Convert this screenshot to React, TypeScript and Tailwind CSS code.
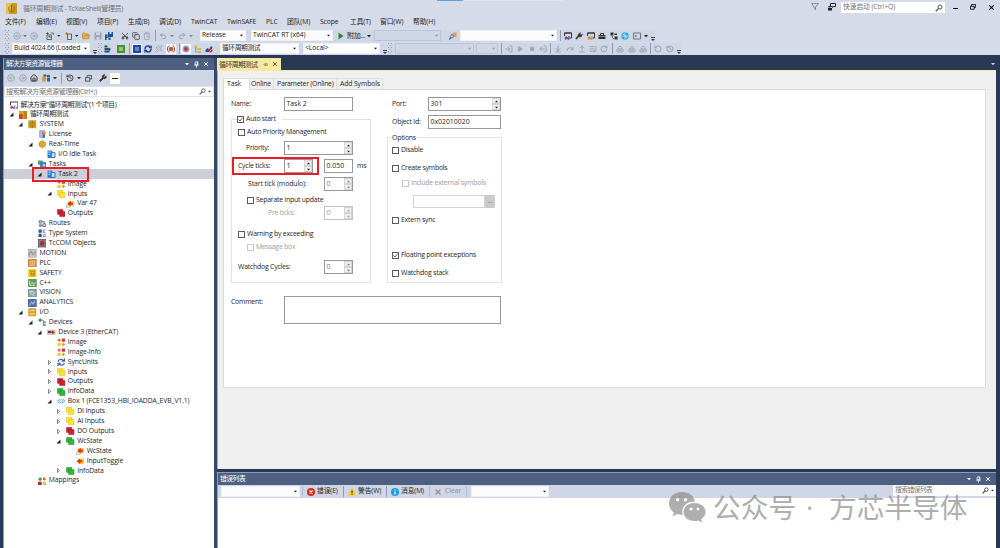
import type { ReactNode } from "react";
import {
  ArrowDownToLine, ArrowUpFromLine, CircleArrowLeft, CircleArrowRight, ClipboardPaste, Copy, FolderOpen, History,
  House, ListEnd, LogIn, LogOut, Play, Redo, Redo2, RefreshCw, RotateCcw, RotateCw, Scissors, Square, Undo2, WandSparkles, Wrench,
} from "lucide-react";
import clsx from "clsx";

/* ---------- small building blocks ---------- */

function Svg({ children, className = "" }: { children: ReactNode; className?: string }) {
  return <svg viewBox="0 0 16 16" className={clsx("block size-2 shrink-0", className)}>{children}</svg>;
}

function Caret({ className = "" }: { className?: string }) {
  return (
    <svg viewBox="0 0 8 8" className={clsx("block size-1 shrink-0", className)}>
      <path d="M0 2h8L4 6.5z" fill="currentColor" />
    </svg>
  );
}

function Overflow({ className = "" }: { className?: string }) {
  return (
    <svg viewBox="0 0 8 16" className={clsx("block h-2 w-1 shrink-0 self-end", className)}>
      <path d="M0 6h8v2H0zM0 10h8l-4 4z" fill="#3a3a3a" />
    </svg>
  );
}

function Grip({ className = "" }: { className?: string }) {
  return (
    <svg viewBox="0 0 4 11" className={clsx("block h-[11px] w-1 shrink-0", className)} fill="#8f98ad">
      {[0, 2, 4, 6, 8, 10].map((y) => (
        <rect key={y} x={y % 4 === 0 ? 0 : 1.5} y={y} width="1" height="1" />
      ))}
      {[0, 4, 8].map((y) => <rect key={y} x="3" y={y} width="1" height="1" />)}
    </svg>
  );
}

function Sep({ className = "" }: { className?: string }) {
  return <div className={clsx("h-[11px] w-px shrink-0 bg-[#8e9bbc]", className)} />;
}

function Combo({ children, className = "", disabled = false }: { children?: ReactNode; className?: string; disabled?: boolean }) {
  return (
    <div
      className={clsx(
        "flex h-[11px] shrink-0 items-center justify-between overflow-hidden border pl-px pr-[2px] text-[6.8px] tracking-[-0.1px] whitespace-nowrap",
        disabled ? "border-[#bcc4d6] bg-[#cfd6e5] text-[#8b93a5]" : "border-[#eef0f6] bg-[#fcfcfc] text-[#1e1e1e]",
        className,
      )}
    >
      <span>{children}</span>
      <Caret className="size-[3px]" />
    </div>
  );
}

function Boxed({ children, className = "" }: { children: ReactNode; className?: string }) {
  return <div className={clsx("flex size-[10px] shrink-0 items-center justify-center bg-[#fffcf4]", className)}>{children}</div>;
}

function Search({ className = "" }: { className?: string }) {
  return (
    <Svg className={className}>
      <circle cx="10" cy="6" r="4" fill="none" stroke="currentColor" strokeWidth="2" />
      <path d="M7 9l-5.500 5.500" stroke="currentColor" strokeWidth="2.5" />
    </Svg>
  );
}

function Pin({ className = "" }: { className?: string }) {
  return (
    <Svg className={className}>
      <path d="M5 2h6v7H5zM3 9.500h10M8 10v5M10 2v7" fill="none" stroke="currentColor" strokeWidth="1.8" />
    </Svg>
  );
}

function Close({ className = "" }: { className?: string }) {
  return (
    <Svg className={className}>
      <path d="M3 3l10 10M13 3L3 13" stroke="currentColor" strokeWidth="2.4" />
    </Svg>
  );
}

function WindowIcon({ accent, className = "" }: { accent: string; className?: string }) {
  return (
    <Svg className={className}>
      <path d="M1 8V2h14v10h-4" fill="none" stroke="#333" strokeWidth="2" />
      <path d="M1 1h14v2H1z" fill="#333" />
      <path d="M2 11l3-2 4 5 1-6v7l-4-2-3 2z" fill={accent} stroke={accent} strokeWidth="1.5" />
    </Svg>
  );
}

/* ---------- top of the window ---------- */

const MENUS = [
  { label: "文件(F)", cls: "w-[31px]" },
  { label: "编辑(E)", cls: "w-[30px]" },
  { label: "视图(V)", cls: "w-[31px]" },
  { label: "项目(P)", cls: "w-[31px]" },
  { label: "生成(B)", cls: "w-[31px]" },
  { label: "调试(D)", cls: "w-[32px]" },
  { label: "TwinCAT", cls: "w-[36px]" },
  { label: "TwinSAFE", cls: "w-[39px]" },
  { label: "PLC", cls: "w-[21px]" },
  { label: "团队(M)", cls: "w-[33px]" },
  { label: "Scope", cls: "w-[30px]" },
  { label: "工具(T)", cls: "w-[30px]" },
  { label: "窗口(W)", cls: "w-[33px]" },
  { label: "帮助(H)", cls: "w-[30px]" },
];

function TitleBar() {
  return (
    <div className="flex h-[15px] items-start">
      <Svg className="mt-[3px] ml-[6px] size-[11px]">
        <rect width="16" height="16" rx="1" fill="#c9991f" />
        <path d="M0 0h9L4 16H0z" fill="#e6c050" />
        <path d="M8 3v10M4 6l4-3 4 3v5l-4 2-4-2z" stroke="#8d6508" fill="none" />
      </Svg>
      <div className="mt-[3px] ml-[6px] w-[120px] whitespace-nowrap text-[7px] leading-[11px] tracking-[-0.32px] text-[#6d6d74]">
        循环周期测试 - TcXaeShell(管理员)
      </div>
      <div className="ml-[294px] h-px w-[26px] bg-[#5fa4e0]" />
      <div className="h-px w-[100px] bg-[#e3e4e8]" />
      <div className="flex-1" />
      <Svg className="mt-[3px] text-[#777]">
        <path d="M1 1h14L9 8v6L2 1" fill="none" stroke="currentColor" strokeWidth="1.5" />
      </Svg>
      <Svg className="mt-[3px] ml-[9px]">
        <path d="M5 1h10v6h-4l-2 2V7H5z" fill="none" stroke="#222" strokeWidth="2" />
        <path d="M1 6h4v3H1zM0 10h8v5H0z" fill="#222" />
      </Svg>
      <div className="mt-[2px] ml-[5px] flex h-[11px] w-[104px] items-center justify-between bg-white px-[2px] text-[6.8px] tracking-[-0.1px] text-[#717171]">
        <span>快速启动 (Ctrl+Q)</span>
        <Search className="text-[#555]" />
      </div>
      <div className="mt-[8px] ml-[8px] h-px w-[5px] bg-black" />
      <Svg className="mt-[4px] ml-[12px] size-[6px]">
        <path d="M4 5V1h11v8h-4M1 6h10v8H1z" fill="none" stroke="#111" strokeWidth="2.5" />
      </Svg>
      <Close className="mt-[4px] mr-[5px] ml-[12px] size-[7px] text-black" />
    </div>
  );
}

function MenuBar() {
  return (
    <div className="flex h-[14px] items-center pl-[5px] text-[6.8px] tracking-[-0.12px] text-[#222]">
      {MENUS.map((m) => (
        <div key={m.label} className={clsx("shrink-0 whitespace-nowrap", m.cls)}>{m.label}</div>
      ))}
    </div>
  );
}

function MainToolbar() {
  return (
    <div className="flex h-[13px] items-center text-[7px]">
      <div className="flex h-[12px] items-center bg-[#cfd6e5] pl-[5px]">
        <Grip />
        <CircleArrowLeft className="ml-1 size-2 text-[#a0a7b7]" strokeWidth={3} />
        <Caret className="ml-[2px] text-[#777]" />
        <CircleArrowRight className="ml-[3px] size-2 text-[#a0a7b7]" strokeWidth={3} />
        <Svg className="ml-2">
          <path d="M2 6h9v9H2zM5 9h3v3" fill="none" stroke="#444" strokeWidth="1.6" />
          <path d="M3 0v6M0 3h6M9 2h6v4" stroke="#555" strokeWidth="1.5" fill="none" />
        </Svg>
        <Caret className="ml-[3px] size-[3.5px]" />
        <Svg className="ml-1">
          <path d="M5 4h8v11H5z" fill="none" stroke="#444" strokeWidth="1.6" />
          <path d="M3 0v6M0 3h6" stroke="#c58a1c" strokeWidth="2" />
        </Svg>
        <Caret className="ml-[2px] size-[3.5px]" />
        <FolderOpen className="ml-[4px] size-2 fill-[#e4b368] text-[#cb8b2c]" strokeWidth={3} />
        <Svg className="ml-1">
          <path d="M1 1h14v14H1z" fill="#9ea4b2" />
          <path d="M4 1h8v5H4zM5 10h6v5H5z" fill="#cfd6e5" />
        </Svg>
        <Svg className="ml-[3px]">
          <path d="M6 0h10v10H6zM0 5h5v6h6v5H0z" fill="#11529b" />
          <path d="M9 0h4v4H9zM3 12h4v4H3z" fill="#cfd6e5" />
        </Svg>
        <Scissors className="ml-2 size-2 -rotate-90 text-[#333]" strokeWidth={2.5} />
        <Copy className="ml-[3px] size-2 text-[#444]" strokeWidth={2.5} />
        <ClipboardPaste className="ml-[3px] size-2 text-[#a0a7b7]" strokeWidth={3} />
        <Sep className="ml-1" />
        <Undo2 className="ml-[3px] size-2 text-[#99a1b3]" strokeWidth={3} />
        <Caret className="ml-[3px] text-[#888]" />
        <Redo2 className="ml-1 size-2 text-[#99a1b3]" strokeWidth={3} />
        <Caret className="ml-[3px] text-[#888]" />
        <Combo className="ml-[7px] w-[46px]">Release</Combo>
        <Combo className="ml-[5px] w-[82px]">TwinCAT RT (x64)</Combo>
        <Svg className="ml-1"><path d="M3 1l10 7-10 7z" fill="#2c872c" /></Svg>
        <span className="ml-[2px] w-[18px] whitespace-nowrap tracking-[-0.3px]">附加...</span>
        <Caret className="ml-[2px]" />
        <Combo disabled className="ml-[3px] w-[67px]" />
        <Svg className="ml-2">
          <path d="M3 3h5l1-2h6v9H6z" fill="#dba04b" />
          <circle cx="6" cy="9" r="3" fill="#cfd6e5" stroke="#2f6db3" strokeWidth="1.5" />
          <path d="M4 11l-4 4" stroke="#2f6db3" strokeWidth="2.5" />
        </Svg>
        <Combo className="ml-[3px] w-[97px]" />
        <Sep className="ml-[3px]" />
        <WindowIcon accent="#7b3a94" className="ml-[3px]" />
        <Svg className="ml-[3px]">
          <path d="M2 14l6-7" stroke="#333" strokeWidth="3.5" />
          <path d="M7 4l4-3-1 4 2 1 3-2-2 5-5 1-2-3z" fill="#333" stroke="#333" />
        </Svg>
        <WindowIcon accent="#d8891d" className="ml-1" />
        <Svg className="ml-[3px]">
          <path d="M1 6h14v3H1zM1 10h14v4H1z" fill="#333" />
          <path d="M5 6V3h6v3" stroke="#333" strokeWidth="2" fill="none" />
        </Svg>
        <Svg className="ml-1">
          <path d="M1 1h6v6H1zM9 9h6v6H9zM9 3h5v3H9zM2 9h4v5h3z" fill="#333" />
        </Svg>
        <Svg className="ml-[3px]">
          <circle cx="8" cy="8" r="7.5" fill="#35a7df" />
          <path d="M8 1v14M1 8h14M3 3l10 10" stroke="#d8effa" strokeWidth="1.3" />
        </Svg>
        <Svg className="ml-1">
          <path d="M1 2h14v12H1zM4 6l3 2-3 2" fill="none" stroke="#666" strokeWidth="1.7" />
        </Svg>
        <Caret className="ml-[3px]" />
        <Overflow className="ml-[3px]" />
      </div>
    </div>
  );
}

function TwinCatToolbar() {
  return (
    <div className="flex h-[13px] items-center text-[7px]">
      <div className="flex h-[12px] items-center bg-[#cfd6e5] pl-[5px]">
        <Grip />
        <Combo className="ml-[3px] w-[78px]">
          <span className="tracking-[-0.2px]">Build 4024.66 (Loaded</span>
        </Combo>
        <Overflow className="ml-[3px]" />
        <Grip className="ml-px" />
        <Svg className="ml-[2px]">
          <path d="M1 1h6v4H1zM1 6h8v4H1zM1 11h10v4H1z" fill="#1c4f82" />
          <path d="M8 5l6 3-4 4z" fill="#333" />
        </Svg>
        <Svg className="ml-[5px]">
          <rect width="16" height="16" fill="#4c8d3b" />
          <rect x="4" y="4" width="8" height="8" fill="#8bd06b" />
        </Svg>
        <Sep className="ml-1" />
        <Boxed className="ml-[2px]">
          <Svg><rect width="16" height="16" fill="#1746b4" /><path d="M4 4h8v8H4z" fill="#6c84c0" /></Svg>
        </Boxed>
        <RefreshCw className="ml-[2px] size-2 text-[#21459c]" strokeWidth={4} />
        <WandSparkles className="ml-[3px] size-2 text-[#9aa2b4]" />
        <Boxed className="ml-[3px]">
          <Svg>
            <circle cx="8" cy="8" r="4.5" fill="#d34b43" />
            <path d="M4 1C0 5 0 11 4 15M12 1c4 4 4 10 0 14" fill="none" stroke="#3d332f" strokeWidth="1.8" />
          </Svg>
        </Boxed>
        <Sep className="ml-[3px]" />
        <Boxed className="ml-px">
          <Svg>
            <circle cx="8" cy="8" r="7" fill="#8ba6dc" />
            <circle cx="8" cy="8" r="4" fill="#d9302c" />
          </Svg>
        </Boxed>
        <Svg className="ml-[3px]">
          <path d="M1 1h5v5H1zM9 6h5v4H9zM9 12h5v4H9z" fill="#dcb23b" />
          <path d="M3 6v8h6M3 8h6" stroke="#777" fill="none" />
        </Svg>
        <Svg className="ml-[3px]">
          <path d="M1 10l4-4 3 3 4-7 3 3-5 9H1z" fill="#264b96" />
          <circle cx="11" cy="11" r="4" fill="#dc2a25" />
          <path d="M9 13l4-4" stroke="#fff" strokeWidth="1.3" />
        </Svg>
        <Combo className="ml-[7px] w-[79px]">
          <span className="tracking-[-0.45px]">循环周期测试</span>
        </Combo>
        <Combo className="ml-1 w-[77px]">&lt;Local&gt;</Combo>
        <Overflow className="ml-[3px]" />
        <Grip className="ml-px" />
        <Combo disabled className="ml-[3px] w-[79px]" />
        <Combo disabled className="ml-[2px] w-[22px]" />
        <div className="flex items-center text-[#9ca4b6]">
          <Sep className="ml-[3px]" />
          <LogIn className="ml-[3px] size-2" strokeWidth={3} />
          <Play className="ml-[3px] size-2 fill-current p-px" />
          <Square className="ml-1 size-2 fill-current p-[1.5px]" />
          <LogOut className="ml-[3px] size-2 -scale-x-100" strokeWidth={3} />
          <Sep className="ml-[3px]" />
          <ArrowDownToLine className="ml-[3px] size-2" strokeWidth={3} />
          <Redo className="ml-1 size-2" strokeWidth={3} />
          <ArrowUpFromLine className="ml-1 size-2" strokeWidth={3} />
          <ListEnd className="ml-[3px] size-2" strokeWidth={3} />
          <RotateCw className="ml-[3px] size-2" strokeWidth={3} />
          <Sep className="ml-1" />
          {["ml-[3px]", "ml-1", "ml-[3px]"].map((ml, i) => (
            <Svg key={i} className={ml}>
              <path d="M2 8h12v6H2zM5 8V5l3-3 3 3v3M5 11h6" fill="none" stroke="currentColor" strokeWidth="2" />
            </Svg>
          ))}
          <Sep className="ml-[3px]" />
          <RotateCcw className="ml-[3px] size-2" strokeWidth={3} />
          <History className="ml-1 size-2" strokeWidth={3} />
        </div>
        <Overflow className="ml-[3px]" />
      </div>
    </div>
  );
}

/* ---------- solution explorer ---------- */

type TreeIcon =
  | "solution" | "project" | "system" | "license" | "realtime" | "task" | "tasks" | "image" | "yellow" | "red" | "green"
  | "var" | "varLink" | "routes" | "types" | "tccom" | "motion" | "plc" | "safety" | "cpp" | "vision" | "analytics" | "io"
  | "devices" | "device" | "sync" | "box" | "mappings";

interface TreeNode {
  label: string;
  level: number;
  icon: TreeIcon;
  state?: "open" | "closed";
  selected?: boolean;
  tight?: boolean;
}

const TREE: TreeNode[] = [
  { label: '解决方案"循环周期测试"(1 个项目)', level: 0, icon: "solution", tight: true },
  { label: "循环周期测试", level: 1, icon: "project", state: "open", tight: true },
  { label: "SYSTEM", level: 2, icon: "system", state: "open" },
  { label: "License", level: 3, icon: "license" },
  { label: "Real-Time", level: 3, icon: "realtime", state: "open" },
  { label: "I/O Idle Task", level: 4, icon: "task" },
  { label: "Tasks", level: 3, icon: "tasks", state: "open" },
  { label: "Task 2", level: 4, icon: "task", state: "open", selected: true },
  { label: "Image", level: 5, icon: "image" },
  { label: "Inputs", level: 5, icon: "yellow", state: "open" },
  { label: "Var 47", level: 6, icon: "varLink" },
  { label: "Outputs", level: 5, icon: "red" },
  { label: "Routes", level: 3, icon: "routes" },
  { label: "Type System", level: 3, icon: "types" },
  { label: "TcCOM Objects", level: 3, icon: "tccom" },
  { label: "MOTION", level: 2, icon: "motion" },
  { label: "PLC", level: 2, icon: "plc" },
  { label: "SAFETY", level: 2, icon: "safety" },
  { label: "C++", level: 2, icon: "cpp" },
  { label: "VISION", level: 2, icon: "vision" },
  { label: "ANALYTICS", level: 2, icon: "analytics" },
  { label: "I/O", level: 2, icon: "io", state: "open" },
  { label: "Devices", level: 3, icon: "devices", state: "open" },
  { label: "Device 3 (EtherCAT)", level: 4, icon: "device", state: "open" },
  { label: "Image", level: 5, icon: "image" },
  { label: "Image-Info", level: 5, icon: "image" },
  { label: "SyncUnits", level: 5, icon: "sync", state: "closed" },
  { label: "Inputs", level: 5, icon: "yellow", state: "closed" },
  { label: "Outputs", level: 5, icon: "red", state: "closed" },
  { label: "InfoData", level: 5, icon: "green", state: "closed" },
  { label: "Box 1 (FCE1353_HBI_IOADDA_EVB_V1.1)", level: 5, icon: "box", state: "open" },
  { label: "DI Inputs", level: 6, icon: "yellow", state: "closed" },
  { label: "AI Inputs", level: 6, icon: "yellow", state: "closed" },
  { label: "DO Outputs", level: 6, icon: "red", state: "closed" },
  { label: "WcState", level: 6, icon: "green", state: "open" },
  { label: "WcState", level: 7, icon: "varLink" },
  { label: "InputToggle", level: 7, icon: "var" },
  { label: "InfoData", level: 6, icon: "green", state: "closed" },
  { label: "Mappings", level: 3, icon: "mappings" },
];

function tile(fill: string, stroke: string, d: string, border = "none") {
  return (
    <>
      <rect x="0.5" y="0.5" width="15" height="15" fill={fill} stroke={border} />
      <path d={d} fill="none" stroke={stroke} strokeWidth="1.6" />
    </>
  );
}

function pages(fill: string, edge: string) {
  return (
    <>
      <path d="M1 1h10v9H1z" fill={fill} stroke={edge} />
      <path d="M5 5h10v9H5z" fill={fill} stroke={edge} />
    </>
  );
}

const TREE_ICONS: Record<TreeIcon, ReactNode> = {
  solution: (
    <>
      <path d="M1 8V2h14v11h-4" fill="none" stroke="#444" strokeWidth="2" />
      <path d="M1 11l3-2 4 5 1-6v7l-4-2-3 2z" fill="#8a4a9e" stroke="#8a4a9e" />
    </>
  ),
  project: (
    <>
      <rect width="16" height="16" fill="#d4a62c" />
      <path d="M9 0h7v16H9z" fill="#b98412" />
      <path d="M0 6h7v10H0z" fill="#dd3a2b" />
    </>
  ),
  system: tile("#cf9f2c", "#a87511", "M8 1v14M4 5l4-2 4 2v6l-4 2-4-2z"),
  license: (
    <>
      <path d="M3 1h9v13H3z" fill="#9ac3e8" stroke="#5b8dbd" />
      <circle cx="11" cy="6" r="3.5" fill="#e57b3a" />
      <path d="M9 9v6l2-1 2 1V9z" fill="#2c6cb5" />
    </>
  ),
  realtime: <path d="M8 1l6 4v6l-6 4-6-4V5z" fill="#dfa62c" stroke="#b8790f" />,
  task: (
    <>
      <path d="M1 1h9v14H1z" fill="#2f80d0" />
      <path d="M3 4h4M3 8h3" stroke="#fff" strokeWidth="1.5" />
      <path d="M8 5h7v9H8z" fill="#d5e8f8" stroke="#2167ae" strokeWidth="1.8" />
    </>
  ),
  tasks: (
    <>
      <path d="M0 1h9v8H0z" fill="#57a05a" />
      <path d="M4 4h11v11H4z" fill="#2f80d0" />
      <path d="M9 8h4v4H9z" fill="#d5e8f8" />
    </>
  ),
  image: (
    <>
      <path d="M1 4h6M4 1v6" stroke="#e0542d" strokeWidth="2" />
      <rect x="9" y="1" width="6" height="6" fill="#d9333a" />
      <rect x="1" y="9" width="6" height="6" fill="#f0cf38" />
      <path d="M9 12h6M12 9v6" stroke="#eb9b27" strokeWidth="2.5" />
    </>
  ),
  yellow: pages("#ffe52e", "#dfb513"),
  red: pages("#d2202f", "#9c1522"),
  green: pages("#2bbb35", "#168a22"),
  var: (
    <>
      <path d="M4 3h11v10H4z" fill="#f8c82c" />
      <path d="M1 8l7-5v3h4v4H8v3z" fill="#dc3026" />
    </>
  ),
  varLink: (
    <>
      <path d="M4 2h11v10H4z" fill="#f8c82c" />
      <path d="M2 7l7-5v3h4v4H9v3z" fill="#dc3026" />
      <path d="M1 10h6v5H1z" fill="#eee" stroke="#999" />
    </>
  ),
  routes: <path d="M2 3h5v4H2zM9 9h5v5H9zM3 11h3v3H3zM4 7v4M7 5h5v4M6 12h3" fill="#d5dbe6" stroke="#526b8b" strokeWidth="1.5" />,
  types: (
    <>
      <path d="M1 1h6v6H1zM1 9h6v6H1z" fill="#32549f" />
      <path d="M14 2h-4v5h4M9 11h6M9 14h6" stroke="#5277bd" strokeWidth="1.6" fill="none" />
    </>
  ),
  tccom: (
    <>
      <rect x="1" y="1" width="14" height="14" fill="#8b8288" stroke="#5d5559" strokeWidth="1.6" />
      <path d="M4 6l4-3 4 3v6H4z" fill="#a92a3b" />
    </>
  ),
  motion: tile("#c4c4c4", "#777", "M2 12c2-9 5-9 6-4s4 2 6-3", "#999"),
  plc: tile("#e08a3c", "#f7cc9d", "M4 4h8v8H4zM8 4v8", "#c16c1e"),
  safety: tile("#f5c60b", "#a87c00", "M3 4h9v8H6V6M4 9h8"),
  cpp: tile("#5f9f58", "#d8efcf", "M3 3v9h10M5 10l3-4 3 4 2-4", "#3c7c38"),
  vision: tile("#8aa0aa", "#e0eaef", "M3 4l9 2-2 6-5-3z", "#5e7680"),
  analytics: tile("#4d6fae", "#cbd9f2", "M3 12L7 5l3 5 3-7", "#30508c"),
  io: tile("#d3a02e", "#fff0b8", "M3 5h9l-2-2M13 11H4l2 2"),
  devices: (
    <>
      <path d="M1 4h6M4 1v6" stroke="#3f9440" strokeWidth="3" />
      <path d="M7 4h3v11M10 7h4v2h-4M10 12h4v2h-4" stroke="#667b69" strokeWidth="1.5" fill="none" />
    </>
  ),
  device: (
    <>
      <path d="M0 3h16v10H0z" fill="#c8c8c8" />
      <path d="M2 6h6v3H2z" fill="#222" />
      <path d="M6 7h4V4l5 4-5 4V9H6z" fill="#d02020" />
    </>
  ),
  sync: <path d="M2 7c1-5 8-6 10-2M14 1v5H9M14 9c-1 5-8 6-10 2M2 15v-5h5" fill="none" stroke="#4569ad" strokeWidth="2.4" />,
  box: (
    <>
      <path d="M5 4L1 8l4 4M11 4l4 4-4 4" fill="none" stroke="#5d93c8" strokeWidth="1.7" />
      <circle cx="8" cy="8" r="3" fill="none" stroke="#73a7d4" strokeWidth="1.7" />
    </>
  ),
  mappings: (
    <>
      <path d="M0 4l4-4 4 4-4 4z" fill="#42a447" />
      <path d="M9 1h3l3 3-3 3-3-3z" fill="#e2572f" />
      <rect x="0" y="9" width="7" height="7" fill="#b62b35" />
      <rect x="9" y="9" width="7" height="7" fill="#ecc637" />
    </>
  ),
};

function TreeRow({ node }: { node: TreeNode }) {
  return (
    <div className={clsx("flex h-[9.9px] items-center text-[6.8px]", node.selected ? "bg-[#ccceda]" : "")}>
      <div className="flex shrink-0 items-center" style={{ width: 5.5 + node.level * 9.45 }}>
        <div className="flex-1" />
        {node.state && (
          <svg viewBox="0 0 10 10" className="mr-[5px] block size-[5px]">
            {node.state === "open"
              ? <path d="M9 1v8H1z" fill="#1e1e1e" />
              : <path d="M3 1l4.500 4L3 9z" fill="#fff" stroke="#555" strokeWidth="1.4" />}
          </svg>
        )}
      </div>
      <Svg className="size-[8.5px]">{TREE_ICONS[node.icon]}</Svg>
      <span className={clsx("ml-[2.5px] whitespace-nowrap", node.tight ? "tracking-[-0.4px]" : "tracking-[-0.1px]")}>
        {node.label}
      </span>
    </div>
  );
}

function PanelTitle({ children }: { children: ReactNode }) {
  return (
    <div className="flex h-[12px] shrink-0 items-center bg-[#4d6082] pr-[5px] pl-[2px] text-[6.8px] tracking-[-0.5px] text-white">
      <span className="flex-1">{children}</span>
      <Caret className="size-[4px]" />
      <Pin className="ml-[4px] size-[7px]" />
      <Close className="ml-[3px] size-[6px]" />
    </div>
  );
}

function SolutionExplorer() {
  return (
    <div className="relative ml-[3px] flex w-[211px] shrink-0 flex-col border-l border-[#8e9bbc] bg-white">
      <PanelTitle>解决方案资源管理器</PanelTitle>
      <div className="flex h-[16px] shrink-0 items-center bg-[#cfd6e5] pl-[3px] text-[#333]">
        <CircleArrowLeft className="size-2 text-[#a0a7b7]" strokeWidth={3} />
        <CircleArrowRight className="ml-1 size-2 text-[#a0a7b7]" strokeWidth={3} />
        <House className="ml-[3px] size-2" strokeWidth={3} />
        <Svg className="ml-1">
          <path d="M0 5h8v10H0z" fill="#d59c3a" />
          <path d="M3 1h6v4H3zM10 2h6v5h-6zM10 8h6v7h-6z" fill="#365f91" />
        </Svg>
        <Caret className="ml-[3px]" />
        <Sep className="ml-1" />
        <History className="ml-1 size-2" strokeWidth={2.5} />
        <Caret className="ml-[3px]" />
        <Svg className="ml-[4px] size-[7px]">
          <path d="M5 5V1h10v8h-4M1 6h10v8H1z" fill="none" stroke="#444" strokeWidth="2" />
        </Svg>
        <Wrench className="ml-[7px] size-2 fill-current" />
        <Boxed className="ml-[3px] h-[11px] w-[10px]"><div className="h-px w-[6px] bg-[#222]" /></Boxed>
      </div>
      <div className="flex h-[11px] shrink-0 items-center border border-[#dfe2ea] pr-[2px] pl-px text-[7px] tracking-[-0.42px] text-[#717171]">
        <span className="flex-1">搜索解决方案资源管理器(Ctrl+;)</span>
        <Search className="size-[7px] text-[#555]" />
        <Caret className="ml-[2px] size-[3px] text-[#555]" />
      </div>
      <div className="mt-[3px] text-[#1e1e1e]">
        {TREE.map((node, i) => <TreeRow key={i} node={node} />)}
      </div>
      {/* highlight around the selected task */}
      <div className="absolute top-[109px] left-[28px] h-[15px] w-[57px] border-2 border-[#ee1c24]" />
    </div>
  );
}

/* ---------- task editor ---------- */

function Check({ children, checked = false, disabled = false, className = "" }: {
  children: ReactNode; checked?: boolean; disabled?: boolean; className?: string;
}) {
  return (
    <div className={clsx("flex items-center gap-[2px] whitespace-nowrap", disabled ? "text-[#9b9b9b]" : "", className)}>
      <svg viewBox="0 0 7 7" className="block size-[7px] shrink-0">
        <rect x="0.5" y="0.5" width="6" height="6" fill="#fff" stroke={disabled ? "#c9c9c9" : "#5a5a5a"} />
        {checked && <path d="M1.500 3.500L3 5l2.700-3.300" fill="none" stroke="#333" strokeWidth="0.8" />}
      </svg>
      <span>{children}</span>
    </div>
  );
}

function Field({ children, className = "", spin = false, disabled = false, muted = false }: {
  children?: ReactNode; className?: string; spin?: boolean; disabled?: boolean; muted?: boolean;
}) {
  return (
    <div
      className={clsx(
        "flex h-[14px] shrink-0 justify-between border bg-white pl-[1.5px] leading-[11px] tracking-normal",
        disabled ? "border-[#c4c4c4] text-[#9b9b9b]" : "border-[#96989c]",
        muted && "text-[#777]",
        className,
      )}
    >
      <span>{children}</span>
      {spin && (
        <div className="flex w-[8px] flex-col">
          <div className="flex flex-1 items-center justify-center border border-[#d4d4d4] bg-[#f0f0f0]">
            <Caret className="size-[3px] rotate-180" />
          </div>
          <div className="flex flex-1 items-center justify-center border border-[#d4d4d4] bg-[#f0f0f0]">
            <Caret className="size-[3px]" />
          </div>
        </div>
      )}
    </div>
  );
}

function TaskForm() {
  return (
    <div className="flex h-[299px] w-[763px] flex-col border border-[#dcdcdc] bg-white pt-[7px] pl-[7px] text-[6.9px] tracking-[-0.22px] text-[#1e1e1e]">
      <div className="flex">
        <div className="w-[156px]">
          <div className="flex h-[14px] items-center">
            <span className="w-[53px]">Name:</span>
            <Field className="w-[69px]">Task 2</Field>
          </div>
          <fieldset className="mt-[4px] h-[168px] w-[140px] border border-[#e2e2e2] pl-[6px]">
            <legend className="-ml-px h-[8px] bg-white pr-[6px] leading-[8px]">
              <Check checked>Auto start</Check>
            </legend>
            <Check className="mt-[5px] h-[9px]">Auto Priority Management</Check>
            <div className="mt-[4px] flex h-[14px] items-center">
              <span className="w-[46px] pl-[8px]">Priority:</span>
              <Field spin className="w-[69px]">1</Field>
            </div>
            <div className="relative mt-[4px] flex h-[14px] items-center">
              <span className="w-[46px] whitespace-nowrap">Cycle ticks:</span>
              <Field spin className="w-[29px]">1</Field>
              <Field className="ml-[11px] w-[29px]">0.050</Field>
              <span className="ml-[4px]">ms</span>
              {/* highlight around the cycle ticks input */}
              <div className="absolute -top-[2px] -left-[6px] h-[18px] w-[87px] border-2 border-[#ee1c24]" />
            </div>
            <div className="mt-[4px] flex h-[14px] items-center">
              <span className="w-[86px] pl-[10px] tracking-[-0.1px]">Start tick (modulo):</span>
              <Field spin muted className="w-[29px]">0</Field>
            </div>
            <Check className="mt-[5px] ml-[9px] h-[9px]">Separate input update</Check>
            <div className="mt-[1px] flex h-[14px] items-center">
              <span className="w-[86px] pl-[30px] text-[#9b9b9b]">Pre ticks:</span>
              <Field spin disabled className="w-[29px]">0</Field>
            </div>
            <Check className="mt-[10px] h-[9px]">Warning by exceeding</Check>
            <Check disabled className="mt-[4px] ml-[9px] h-[9px]">Message box</Check>
            <div className="mt-[8px] flex h-[14px] items-center">
              <span className="w-[86px]">Watchdog Cycles:</span>
              <Field spin muted className="w-[29px]">0</Field>
            </div>
          </fieldset>
        </div>

        <div className="w-[115px]">
          <div className="flex h-[14px] items-center pl-[5px]">
            <span className="w-[36px]">Port:</span>
            <Field spin className="w-[73px]">301</Field>
          </div>
          <div className="mt-[4px] flex h-[14px] items-center pl-[5px]">
            <span className="w-[36px] whitespace-nowrap">Object Id:</span>
            <Field className="w-[73px]">0x02010020</Field>
          </div>
          <fieldset className="mt-[4px] h-[150px] w-[115px] border border-[#e2e2e2] pl-[4px]">
            <legend className="-ml-[1px] h-[9px] px-px leading-[9px]">Options</legend>
            <Check className="mt-[4px] h-[9px]">Disable</Check>
            <Check className="mt-[9px] h-[9px]">Create symbols</Check>
            <Check disabled className="mt-[6px] ml-[10px] h-[9px]">Include external symbols</Check>
            <div className="mt-[7px] ml-[21px] flex h-[13px]">
              <div className="w-[72px] border border-[#d5d5d5]" />
              <div className="flex w-[10px] items-center justify-center bg-[#cbcbcb] text-[#777]">...</div>
            </div>
            <Check className="mt-[8px] h-[9px]">Extern sync</Check>
            <Check checked className="mt-[26px] h-[9px]">Floating point exceptions</Check>
            <Check className="mt-[9px] h-[9px]">Watchdog stack</Check>
          </fieldset>
        </div>
      </div>
      <div className="mt-[13px] flex">
        <span className="w-[53px] pt-px leading-[9px]">Comment:</span>
        <div className="h-[28px] w-[217px] border border-[#96989c]" />
      </div>
    </div>
  );
}

function Editor() {
  return (
    <div className="flex h-[411px] shrink-0 flex-col">
      <div className="flex h-[12px] items-center pr-[1px]">
        <div className="flex h-[12px] w-[64px] items-center bg-[#f5e8a0] pl-[2px] text-[7px] text-[#333]">
          <span className="w-[44px] whitespace-nowrap tracking-[-0.6px]">循环周期测试</span>
          <Pin className="size-[5px] rotate-90 text-[#8a7a45]" />
          <Close className="ml-[4px] size-[6px] text-[#6f6030]" />
        </div>
        <div className="flex-1" />
        <Caret className="text-[#cfd6e5]" />
      </div>
      <div className="h-px bg-[#f5e8a0]" />
      <div className="flex-1 border-l border-[#a7a7a7] bg-[#efefef] pl-[5px]">
        <div className="flex h-[18px] items-end text-[6.9px] tracking-[-0.1px] text-[#1e1e1e]">
          <div className="-mb-px h-[12px] w-[27px] border border-b-0 border-[#dcdcdc] bg-white pl-[3px] leading-[10px]">Task</div>
          <div className="h-[11px] w-[24px] border border-l-0 border-b-0 border-[#dcdcdc] pl-px leading-[10px] tracking-[-0.2px]">Online</div>
          <div className="h-[11px] w-[63px] border border-l-0 border-b-0 border-[#dcdcdc] pl-[3px] leading-[10px] tracking-[-0.25px] whitespace-nowrap">Parameter (Online)</div>
          <div className="h-[11px] w-[46px] border border-l-0 border-b-0 border-[#dcdcdc] pl-[3px] leading-[10px] tracking-[-0.15px] whitespace-nowrap">Add Symbols</div>
        </div>
        <TaskForm />
      </div>
    </div>
  );
}

/* ---------- error list ---------- */

function ErrorList() {
  return (
    <div className="flex flex-1 flex-col border-t border-l border-[#8e9bbc] bg-white">
      <PanelTitle>错误列表</PanelTitle>
      <div className="flex h-[13px] shrink-0 items-center bg-[#cfd6e5] pl-[3px] text-[6.8px] tracking-[-0.15px] whitespace-nowrap text-[#1e1e1e]">
        <Combo className="w-[79px]" />
        <Sep className="ml-[2px] bg-[#b5bdd0]" />
        <Svg className="ml-[4px]">
          <circle cx="8" cy="8" r="8" fill="#d9291c" />
          <path d="M5 5l6 6M11 5l-6 6" stroke="#fff" strokeWidth="2.5" />
        </Svg>
        <span className="ml-[2px] w-[24px]">错误(E)</span>
        <Sep className="ml-[2px]" />
        <Svg className="ml-[4px]">
          <path d="M8 0l8 15H0z" fill="#fc0" />
          <path d="M8 5v5M8 11.500v2" stroke="#111" strokeWidth="2" />
        </Svg>
        <span className="ml-[2px] w-[27px]">警告(W)</span>
        <Sep className="ml-px" />
        <Svg className="ml-[4px]">
          <circle cx="8" cy="8" r="8" fill="#1ba1e2" />
          <path d="M8 3v2M8 7v6" stroke="#fff" strokeWidth="2.5" />
        </Svg>
        <span className="ml-[2px] w-[28px]">消息(M)</span>
        <Sep className="bg-[#b5bdd0]" />
        <Close className="ml-[4px] text-[#8e8e96]" />
        <span className="ml-[3px] w-[21px] tracking-normal text-[#8e8e96]">Clear</span>
        <Sep className="bg-[#b5bdd0]" />
        <Combo className="ml-[4px] w-[78px]" />
        <div className="flex-1" />
        <div className="flex h-[11px] w-[103px] items-center self-start bg-[#fcfcfc] pr-[2px] pl-[2px] tracking-[-0.6px] text-[#777]">
          <span className="flex-1">搜索错误列表</span>
          <Search className="size-[7px] text-[#444]" />
          <Caret className="ml-[2px] size-[3px] text-[#444]" />
        </div>
      </div>
    </div>
  );
}

function Watermark() {
  return (
    <div className="absolute top-[488px] left-[668px] flex h-[38px] items-center text-[#8c8c8c] opacity-70">
      <svg viewBox="0 0 38 32" className="block h-[32px] w-[38px]">
        <path
          fillRule="evenodd"
          fill="currentColor"
          d="M14 1C6 1 1 6 1 12.500c0 4 2 7 5 9L4.500 25.500l5-2.500c1.500.500 3 .700 5 .700C13 16 18 10.500 27 10.500 26 5 21 1 14 1zM9.500 7a1.700 1.700 0 1 1 0 3.400a1.700 1.700 0 0 1 0-3.400zM17.500 7a1.700 1.700 0 1 1 0 3.400a1.700 1.700 0 0 1 0-3.400z"
        />
        <path
          fillRule="evenodd"
          fill="currentColor"
          d="M26.500 12C20 12 15.500 16 15.500 21s4.500 9 11 9c1.500 0 3-.200 4-.600l3.800 2-1-3.400c2.500-1.600 4.200-4 4.200-7 0-5-4.500-9-11-9zM23 16.500a1.500 1.500 0 1 1 0 3a1.500 1.500 0 0 1 0-3zM30 16.500a1.500 1.500 0 1 1 0 3a1.500 1.500 0 0 1 0-3z"
        />
      </svg>
      <div className="ml-[7px] flex text-[27.7px] leading-[36px] whitespace-nowrap">
        <span className="w-[86px]">公众号</span>
        <span className="w-[30px] pl-[7px]">·</span>
        <span>方芯半导体</span>
      </div>
    </div>
  );
}

export default function App() {
  return (
    <div className="relative flex h-[548px] w-[1000px] flex-col overflow-hidden bg-[#293955] font-['Open_Sans','Noto_Sans_CJK_SC',sans-serif] leading-none">
      <div className="h-[55px] shrink-0 bg-[#d6dbe9] text-[#1e1e1e]">
        <TitleBar />
        <MenuBar />
        <MainToolbar />
        <TwinCatToolbar />
      </div>
      <div className="flex flex-1 pt-[3px]">
        <SolutionExplorer />
        <div className="w-[3px] shrink-0 bg-[#35496a]" />
        <div className="mr-[4px] flex flex-1 flex-col">
          <Editor />
          <div className="h-[3px] shrink-0" />
          <ErrorList />
        </div>
      </div>
      <Watermark />
    </div>
  );
}
